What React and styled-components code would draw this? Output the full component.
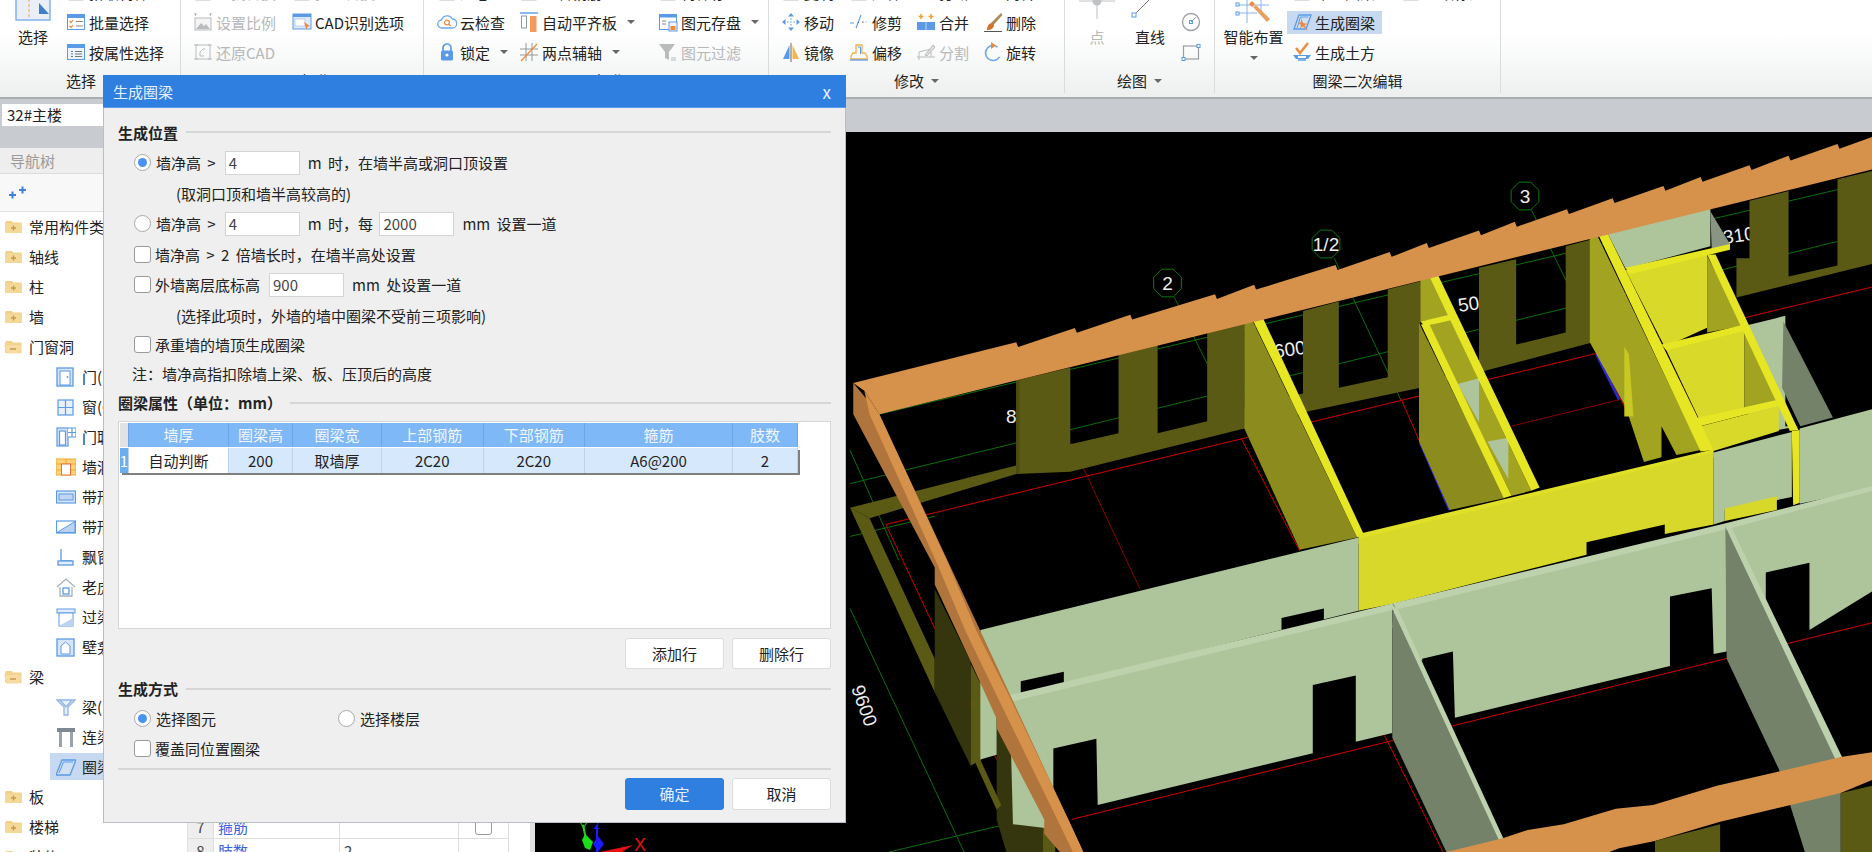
import React from "react";
import styled, { createGlobalStyle } from "styled-components";

const Global = createGlobalStyle`
  html, body { margin: 0; padding: 0; overflow: hidden; background: #c8cbd0; }
  body { font-family: "Noto Sans CJK SC", "Noto Sans", sans-serif; font-size: 15px; color: #222; }
  * { box-sizing: border-box; }
`;

const Page = styled.div`
  position: relative;
  display: flex;
  flex-direction: column;
  height: 100vh;
  overflow: hidden;
`;

/* ribbon */
const Ribbon = styled.div`
  flex: none;
  display: flex;
  height: 99px;
  overflow: hidden;
  background: linear-gradient(#ffffff 35%, #eef0f0 97%);
  border-bottom: 2px solid #a9adb1;
`;
const Group = styled.div`
  flex: none;
  width: ${(p) => p.$w}px;
  height: 116px;
  margin-top: -23px;
  display: flex;
  flex-direction: column;
  border-right: 1px solid #d9dbdc;
`;
const GroupBody = styled.div`
  display: flex;
  height: 91px;
  padding-left: ${(p) => p.$pad || 0}px;
`;
const GroupLabel = styled.div`
  height: 25px;
  display: flex;
  align-items: center;
  justify-content: center;
  padding-right: ${(p) => p.$right || 0}px;
  line-height: 1;
`;
const Col = styled.div`
  flex: none;
  width: ${(p) => p.$w}px;
  display: flex;
  flex-direction: column;
  margin-left: ${(p) => p.$left || 0}px;
`;
const ToolRow = styled.div`
  height: 30px;
  display: flex;
  align-items: center;
  white-space: nowrap;
`;
const ToolFace = styled.div`
  display: flex;
  align-items: center;
  gap: 3px;
  height: 23px;
  padding-left: ${(p) => p.$inset || 0}px;
  width: ${(p) => (p.$wide ? "95px" : "auto")};
  background: ${(p) => (p.$active ? "#c6d9f0" : "transparent")};
  color: ${(p) => (p.$muted ? "#b6b8ba" : "#222")};
`;
const IconBox = styled.svg`
  flex: none;
  width: 20px;
  height: 20px;
`;
const Caret = styled.span`
  flex: none;
  width: 0;
  height: 0;
  margin-left: ${(p) => p.$left ?? 7}px;
  margin-top: ${(p) => p.$top || 0}px;
  border-left: 4px solid transparent;
  border-right: 4px solid transparent;
  border-top: 4px solid #666;
`;
const BigTool = styled.div`
  flex: none;
  width: ${(p) => p.$w}px;
  margin-left: ${(p) => p.$left || 0}px;
  display: flex;
  flex-direction: column;
  align-items: center;
  color: ${(p) => (p.$muted ? "#b6b8ba" : "#222")};
  white-space: nowrap;
`;
const BigIcon = styled.svg`
  flex: none;
  width: ${(p) => p.$w}px;
  height: 46px;
  margin-bottom: 4px;
`;
const BigText = styled.div`
  height: 20px;
  line-height: 20px;
`;

/* floor selector strip */
const Strip = styled.div`
  flex: none;
  height: 33px;
  padding: 5px 0 0 2px;
  background: #c8cbd0;
`;
const FloorSelect = styled.div`
  width: 160px;
  height: 22px;
  line-height: 22px;
  padding-left: 5px;
  background: #fff;
`;

/* main area */
const Main = styled.div`
  flex: 1;
  min-height: 0;
  display: flex;
`;
const Side = styled.div`
  flex: none;
  width: 535px;
  display: flex;
  padding-top: 16px;
  background: #c8cbd0;
`;
const TreePane = styled.div`
  flex: none;
  width: 187px;
  display: flex;
  flex-direction: column;
  background: #fff;
  overflow: hidden;
`;
const NavHead = styled.div`
  flex: none;
  height: 26px;
  line-height: 26px;
  padding-left: 10px;
  background: #eeeeee;
  color: #9a9a9a;
  border-bottom: 1px solid #dcdcdc;
`;
const NavTools = styled.div`
  flex: none;
  height: 38px;
  display: flex;
  align-items: center;
  padding-left: 8px;
  background: #f8f8f8;
  border-bottom: 1px solid #e0e0e0;
`;
const TreeRow = styled.div`
  flex: none;
  height: 30px;
  display: flex;
  align-items: center;
  gap: 6px;
  margin-left: ${(p) => (p.$child ? 50 : 0)}px;
  padding-left: ${(p) => (p.$child ? 6 : 4)}px;
  background: ${(p) => (p.$selected ? "#c6d9f0" : "transparent")};
  background-clip: padding-box;
  border-top: 1px solid transparent;
  border-bottom: 2px solid transparent;
  white-space: nowrap;
`;
const PropPane = styled.div`
  flex: 1;
  padding: 667px 5px 0 0;
  background: #fff;
  border-right: 5px solid #dfe0e2;
  overflow: hidden;
`;
const PropRow = styled.div`
  display: grid;
  grid-template-columns: 26px 126px 119px 51px;
  width: 322px;
  height: 24px;
  border-bottom: 1px solid #dedede;
`;
const PropCell = styled.div`
  display: flex;
  align-items: center;
  justify-content: ${(p) => (p.$center ? "center" : "flex-start")};
  padding-left: ${(p) => (p.$center ? 0 : 4)}px;
  border-left: 1px solid #dedede;
  border-right: ${(p) => (p.$last ? "1px solid #dedede" : "0")};
  background: ${(p) => (p.$head ? "#eeeeee" : "#fff")};
  color: ${(p) => (p.$link ? "#3a62e0" : "#444")};
`;
const Viewport = styled.div`
  flex: 1;
  min-width: 0;
  background: #000;
`;
const Scene = styled.svg`
  display: block;
  width: 100%;
  height: 100%;
`;

/* dialog */
const Dialog = styled.div`
  position: absolute;
  top: 75px;
  left: 103px;
  width: 743px;
  height: 748px;
  background: #efefef;
  border: 1px solid #b9bdc4;
  border-top: 0;
`;
const TitleBar = styled.div`
  height: 33px;
  margin: 0 -1px;
  padding: 0 15px 0 10px;
  display: flex;
  align-items: center;
  justify-content: space-between;
  background: #2e7fe0;
  border-bottom: 1px solid #5b9bea;
  color: #e6f0fc;
`;
const CloseX = styled.span`
  font-size: 17px;
  line-height: 1;
`;
const DialogBody = styled.div`
  padding: 0 14px;
`;
const Section = styled.div`
  height: 20px;
  margin-top: ${(p) => p.$top}px;
  display: flex;
  align-items: center;
  gap: 8px;
  font-weight: 700;
  line-height: 1;
  white-space: nowrap;
  &::after {
    content: "";
    flex: 1;
    height: 2px;
    background: #d6d6d6;
  }
`;
const Row = styled.div`
  height: ${(p) => p.$h || 30.5}px;
  margin-top: ${(p) => p.$top || 0}px;
  display: flex;
  align-items: center;
  padding-left: ${(p) => p.$indent ?? 16}px;
  white-space: pre;
  word-spacing: 3px;
`;
const Radio = styled.span`
  flex: none;
  width: 17px;
  height: 17px;
  margin-right: 5px;
  display: flex;
  align-items: center;
  justify-content: center;
  border: 1.5px solid #a8a8a8;
  border-radius: 50%;
  background: #fff;
  &::after {
    content: "";
    width: 9px;
    height: 9px;
    border-radius: 50%;
    background: ${(p) => (p.$on ? "#4a92f2" : "transparent")};
  }
`;
const Check = styled.span`
  flex: none;
  width: 17px;
  height: 17px;
  margin-right: ${(p) => (p.$flush ? 0 : 4)}px;
  border: 1.5px solid #9a9a9a;
  border-radius: 3px;
  background: #fff;
`;
const NumInput = styled.span`
  flex: none;
  width: 75px;
  height: 24px;
  line-height: 22px;
  margin: 0 8px 0 ${(p) => p.$left ?? 8}px;
  padding-left: 3px;
  background: #fff;
  border: 1px solid #d4d4d4;
  color: #444;
`;
const Spread = styled.span`
  width: ${(p) => p.$w}px;
  flex: none;
`;
const TableBox = styled.div`
  height: 208px;
  margin-top: 8px;
  padding-top: 1px;
  padding-left: 1px;
  background: #fff;
  border: 1px solid #d6d6d6;
`;
const GridRow = styled.div`
  display: grid;
  grid-template-columns: 9px 100px 64px 89px 101.5px 101.5px 148px 65px;
  width: 678px;
  height: ${(p) => p.$h}px;
  margin-bottom: ${(p) => p.$gap || 0}px;
  box-shadow: ${(p) => (p.$data ? "2px 2px 0 #7f7f7f" : "none")};
`;
const HeadCell = styled.div`
  display: flex;
  align-items: center;
  justify-content: center;
  background: ${(p) => (p.$corner ? "#e2e2e2" : "#7fb8f6")};
  border-right: 1px solid #6aa6ea;
  color: #f1f6fd;
`;
const DataCell = styled.div`
  display: flex;
  align-items: center;
  justify-content: center;
  background: ${(p) => p.$bg || "#d5e8fc"};
  border-right: 1px solid #bcd3ea;
  color: ${(p) => p.$color || "#222"};
`;
const ButtonBar = styled.div`
  display: flex;
  justify-content: flex-end;
  gap: 8px;
  margin-top: ${(p) => p.$top}px;
`;
const Btn = styled.div`
  width: 99px;
  height: ${(p) => p.$h}px;
  display: flex;
  align-items: center;
  justify-content: center;
  border-radius: 3px;
  border: 1px solid ${(p) => (p.$primary ? "#2e7fe0" : "#dcdcdc")};
  background: ${(p) => (p.$primary ? "#2e7fe0" : "#fff")};
  color: ${(p) => (p.$primary ? "#e6f0fc" : "#222")};
`;
const Rule = styled.div`
  height: 2px;
  margin-top: 4px;
  background: #d6d6d6;
`;

const B = "#5b9ae6";
const O = "#ef8a3c";
const G = "#b9bbbd";

const icons = {
  stub: (c) => <rect x="3" y="1" width="14" height="17" fill="#f4f4f4" stroke={c || G} />,
  batch: () => (
    <g fill="none">
      <rect x="1.5" y="2.5" width="17" height="15" fill="#fff" stroke={B} />
      <rect x="1" y="2" width="18" height="4" fill={B} />
      <path d="M3.5 9l1.5 1.5 2-2.5M3.5 14l1.5 1.5 2-2.5" stroke={O} strokeWidth="1.2" />
      <path d="M10 9.5h7M10 14h7" stroke="#888" />
    </g>
  ),
  attr: () => (
    <g fill="none">
      <rect x="1.5" y="2.5" width="17" height="15" fill="#eef4fc" stroke={B} />
      <rect x="1" y="2" width="18" height="4" fill={B} />
      <path d="M9 9.5h7M9 12h7M9 14.5h7M5 12h2M5 9.5h2M5 14.5h2" stroke="#777" />
    </g>
  ),
  scale: () => (
    <g>
      <path d="M1 2h3M2.5 1v3M16 2h3M17.5 1v3" stroke={G} />
      <rect x="2" y="6" width="16" height="12" fill="#f4f4f4" stroke={G} />
      <path d="M3 17l5-6 3 3 2-2 4 5z" fill={G} />
    </g>
  ),
  restore: () => (
    <g fill="none" stroke={G}>
      <rect x="3" y="3" width="14" height="14" />
      <path d="M1 3h4M15 3h4M1 17h4M15 17h4M7 10l3-3h2M7 10v4h4" />
    </g>
  ),
  cad: () => (
    <g>
      <rect x="1" y="2" width="18" height="15" fill="#dfeafa" stroke={B} />
      <rect x="1" y="2" width="18" height="3" fill={B} />
      <rect x="3" y="7" width="10" height="7" fill="#fff" stroke="#9ab9e4" strokeWidth=".6" />
      <path d="M12 10l6 4-2.5.7-1 3z" fill={O} />
    </g>
  ),
  cloud: () => (
    <g>
      <path d="M5 16a4 4 0 0 1-.5-8A6 6 0 0 1 15.5 7 4.5 4.5 0 0 1 15 16z" fill="#fff" stroke="#6aa8ee" strokeWidth="1.3" />
      <circle cx="10" cy="10.5" r="2.4" fill="none" stroke={O} strokeWidth="1.2" />
      <path d="M12 12.5l2 1.5" stroke={O} strokeWidth="1.2" />
    </g>
  ),
  lock: () => (
    <g>
      <path d="M6 9V6a4 4 0 0 1 8 0v3" fill="none" stroke={B} strokeWidth="1.7" />
      <rect x="4" y="8.5" width="12" height="10" rx="1.5" fill={B} />
      <circle cx="10" cy="13" r="1.6" fill="#fff" />
    </g>
  ),
  panel: () => (
    <g>
      <path d="M1 1h18" stroke={B} strokeWidth="1.4" />
      <rect x="2.5" y="4" width="5" height="12" fill="#fff" stroke="#8c98a6" />
      <rect x="11" y="4" width="6.5" height="16" fill="#f59a5e" />
    </g>
  ),
  axis: () => (
    <g fill="none">
      <path d="M1 7h18M1 13h18M7 1v18M13 1v18" stroke="#8c8c8c" strokeWidth=".9" />
      <path d="M2 19L18 2" stroke={O} strokeWidth="1.2" />
    </g>
  ),
  disk: () => (
    <g>
      <rect x="1.5" y="2.5" width="17" height="15" fill="#fff" stroke={B} />
      <rect x="1" y="2" width="18" height="3.5" fill={B} />
      <path d="M4 9h4M4 12h4" stroke="#888" />
      <rect x="11" y="10" width="8" height="9" fill="#f6f6f6" stroke={B} />
      <rect x="12.5" y="14" width="5" height="4" fill={O} />
    </g>
  ),
  filter: () => (
    <g>
      <path d="M1 2h16l-6 8v8l-4-2v-6z" fill={G} />
      <path d="M13 16h5M13 18h5" stroke={G} />
    </g>
  ),
  move: () => (
    <g fill={B}>
      <path d="M10 1l3 3.5H7zM10 19l3-3.500H7zM1 10l3.500-3v6zM19 10l-3.500-3v6z" />
      <path d="M6 10h1.500M9 10h1.500M12.500 10h1.500M10 6.500v1.500M10 12v1.500" stroke={B} />
    </g>
  ),
  trim: () => (
    <g stroke={B} fill="none">
      <path d="M1 11h4M14 10h1M16.500 10h1" />
      <path d="M12 3L7 16" strokeWidth="1.1" />
      <path d="M13 10h1M9 10.500h1" stroke="#555" />
    </g>
  ),
  merge: () => (
    <g>
      <rect x="1" y="10" width="18" height="8" fill={B} />
      <path d="M5 2v5M2.500 4.500h5M15 2v5M12.500 4.500h5" stroke="#f0a030" strokeWidth="1.500" />
      <path d="M10 10v8" stroke="#fff" strokeWidth=".6" />
    </g>
  ),
  erase: () => (
    <g>
      <path d="M8 11L18 1l1.500 2-9 10z" fill="#b08a5a" />
      <path d="M4 18c0-4 2-7 5-7l2 2c0 3-3 5-7 5z" fill="#d2722e" />
      <path d="M1 19.500h18" stroke="#555" />
    </g>
  ),
  mirror: () => (
    <g>
      <path d="M8.500 3v14H2z" fill={B} />
      <path d="M11.500 3v14H18z" fill="#f5b54a" />
      <path d="M10 1v19" stroke="#666" />
    </g>
  ),
  offset: () => (
    <g fill="none">
      <path d="M2 14l2-3h3V3h6v8h3l2 3v3H2z" stroke="#f3b04a" strokeWidth="1.300" />
      <path d="M1 18h18" stroke={B} strokeWidth="1.300" />
      <path d="M8.500 5h3v7" stroke={B} />
    </g>
  ),
  split: () => (
    <g fill="none" stroke={G}>
      <path d="M1 15h18M3 18V10l12-3v8" />
      <path d="M9 13L17 3l2 2-8 9z" fill="#ddd" />
    </g>
  ),
  rotate: () => (
    <g fill="none">
      <circle cx="10" cy="11" r="7.500" stroke="#6aa8ee" strokeWidth="1.600" strokeDasharray="36 8" strokeDashoffset="-4" />
      <path d="M8 0v7l5-3.500z" fill={O} />
    </g>
  ),
  lineEnd: () => <rect x="8" y="-3" width="4" height="10" fill="none" stroke={B} />,
  circle: () => (
    <g fill="none">
      <circle cx="10" cy="10" r="8.500" stroke="#9a9ea3" strokeWidth="1.300" />
      <path d="M10 10l5-5" stroke="#9a9ea3" />
      <rect x="8.500" y="8.500" width="3" height="3" stroke={B} />
    </g>
  ),
  rect: () => (
    <g fill="none">
      <rect x="2.500" y="4" width="15" height="13" stroke="#9a9ea3" strokeWidth="1.200" />
      <rect x="1" y="15.500" width="3" height="3" fill="#fff" stroke={B} />
      <rect x="16" y="2.500" width="3" height="3" fill="#fff" stroke={B} />
    </g>
  ),
  ring: () => (
    <g>
      <path d="M2 17L7 3h12l-5 14z" fill="#cfe0f5" stroke={B} strokeWidth="1.300" />
      <path d="M5 16L8.500 5h8" fill="none" stroke={B} />
      <path d="M9 6l2 5 5 1-3.500 1 3.500 6-5-4.500-3 1.500 1-3-3-2 3-1z" fill={O} />
    </g>
  ),
  earth: () => (
    <g>
      <path d="M4 6l4 5 8-10" fill="none" stroke={O} strokeWidth="2.400" />
      <path d="M1 13h18l-3 4H4z" fill={B} />
      <rect x="6" y="14" width="8" height="2" fill="#fff" />
      <path d="M6 18h8" stroke={B} strokeWidth="1.500" />
    </g>
  ),
};

const Tool = ({ icon, label, muted, caret, active, wide, inset }) => (
  <ToolRow>
    <ToolFace $muted={muted} $active={active} $wide={wide} $inset={inset}>
      <IconBox viewBox="0 0 20 20">{icons[icon]()}</IconBox>
      {label && <span>{label}</span>}
      {caret && <Caret />}
    </ToolFace>
  </ToolRow>
);

const Folder = ({ open }) => (
  <svg width="19" height="14" viewBox="0 0 19 14">
    <path d="M1 3l1-2h6l1 1.500h8.500V13H1z" fill={open ? "#f2d28c" : "#f0cf88"} />
    {open ? (
      <path d="M0 5h18l-3 8.500H3z" fill="#f6dca2" />
    ) : (
      <rect x="1" y="3.500" width="17" height="9.500" fill="#f3d898" />
    )}
    {open ? (
      <path d="M6 9h6" stroke="#c79a48" strokeWidth="1.500" />
    ) : (
      <path d="M7 8h5M9.500 5.500v5" stroke="#c79a48" strokeWidth="1.300" />
    )}
  </svg>
);

const leaf = {
  door: <g><rect x="1" y="1" width="16" height="18" fill="#d7e5f8" stroke={B} strokeWidth="1.300" /><rect x="4" y="4" width="10" height="14" fill="#fff" stroke={B} /><circle cx="11.500" cy="10" r=".9" fill={B} /></g>,
  win: <g fill="#e8f0fb" stroke={B} strokeWidth="1.200"><rect x="2" y="3" width="15" height="15" /><path d="M9.500 3v15M2 10.500h15" /></g>,
  doorwin: <g fill="#fff" stroke={B} strokeWidth="1.200"><rect x="1" y="1" width="11" height="18" fill="#d7e5f8" /><rect x="3.500" y="4" width="6" height="14" /><path d="M12 1h8v9h-8M16 1v9M12 5.500h8" /></g>,
  hole: <g><rect x="0" y="2" width="20" height="16" fill="#ffd27a" stroke="#f0a830" /><path d="M0 7h20M0 13h5M15 13h5M10 2v5" stroke="#f0a830" /><rect x="5.500" y="7" width="9" height="11" fill="#fff" stroke="#e2713a" /></g>,
  band: <g><rect x="0.500" y="4" width="19" height="12" fill="#d7e5f8" stroke={B} strokeWidth="1.200" /><rect x="3" y="7" width="14" height="6" fill="#c0d6f2" stroke={B} /></g>,
  slant: <g><rect x="0.500" y="4" width="19" height="12" fill="#fff" stroke={B} strokeWidth="1.200" /><path d="M1 15.500L19 4.500v11z" fill="#bcd3f0" stroke={B} /></g>,
  bay: <g fill="none" stroke={B} strokeWidth="1.300"><path d="M5 2v12h11" /><rect x="2" y="14" width="15" height="4" fill="#e4eefa" /></g>,
  dormer: <g fill="none" stroke="#a4b0bc" strokeWidth="1.300"><path d="M1 10l9-8 9 8" /><path d="M4 10v9h12v-9" /><rect x="7" y="11" width="6" height="6" stroke={B} /></g>,
  lintel: <g><rect x="1" y="2" width="18" height="4" fill="#e4eefa" stroke={B} /><rect x="3" y="6" width="14" height="13" fill="#fff" stroke={B} /><path d="M3 19l14-8v8z" fill="#bcd3f0" /></g>,
  niche: <g><rect x="1" y="2" width="17" height="17" fill="#d7e5f8" stroke={B} strokeWidth="1.300" /><path d="M5 17V9l4.500-4L14 9v8z" fill="#fff" stroke={B} /></g>,
  beam: <g fill="none" stroke="#8fb4e6" strokeWidth="1.300"><path d="M1 3h18l-7 7v8H8v-8z" fill="#e6f0fb" /><path d="M4 3l6 7 6-7" /></g>,
  link: <g><rect x="1" y="1" width="18" height="4" fill="#7e8894" /><rect x="3" y="5" width="3" height="15" fill="#9aa3ad" /><rect x="14" y="5" width="3" height="15" fill="#9aa3ad" /></g>,
  ring: <g><path d="M0 18L6 3h14l-6 15z" fill="#cfe0f5" stroke={B} strokeWidth="1.300" /><path d="M3 16L7.500 5H17" fill="none" stroke={B} /></g>,
};

const treeData = [
  ["常用构件类型"], ["轴线"], ["柱"], ["墙"], ["门窗洞", "open"],
  ["门(M)", "door"], ["窗(C)", "win"], ["门联窗(A)", "doorwin"], ["墙洞(D)", "hole"],
  ["带形窗(C)", "band"], ["带形洞", "slant"], ["飘窗(PC)", "bay"], ["老虎窗", "dormer"],
  ["过梁(G)", "lintel"], ["壁龛(I)", "niche"], ["梁", "open"], ["梁(L)", "beam"],
  ["连梁(G)", "link"], ["圈梁(B)", "ring"], ["板"], ["楼梯"], ["装修"],
];

const TreeItem = ({ label, kind }) => {
  const isFolder = !kind || kind === "open";
  return (
    <TreeRow $child={!isFolder} $selected={kind === "ring"}>
      {isFolder ? (
        <Folder open={kind === "open"} />
      ) : (
        <svg width="20" height="20" viewBox="0 0 20 20">{leaf[kind]}</svg>
      )}
      <span>{label}</span>
    </TreeRow>
  );
};

// the far beam has a sawtooth top edge, one tooth per bay
const teeth = [255, 345, 430, 560, 620, 745, 828, 885, 965, 1020, 1100, 1170, 1248, 1305, 1380, 1440, 1515];
const topEdge = (x) => 590 - 0.328 * (x - 5);
const farBeam = [
  "5,590",
  ...teeth.flatMap((x) => [`${x},${topEdge(x) - 3}`, `${x + 3},${topEdge(x) + 7}`]),
  `1568,${topEdge(1568)}`,
  "1568,145 45,655 22,606",
].join(" ");

/* scene: points are taken against a 1568x1568 grid laid over the right part of the view */
const shapes = [
  // back wall
  ["#5a5a14", "0,850 255,762 255,780 30,872"],
  ["#5a5a14", "255,585 338,558 338,718 412,695 412,520 472,502 472,695 548,670 548,470 605,450 605,685 338,775 255,780"],
  ["#4c4c10", "255,585 260,585 260,780 255,780"],
  ["#5a5a14", "605,640 695,612 695,440 750,420 750,600 825,578 825,395 875,378 875,590 965,555 965,350 1022,332 1022,510 1098,485 1098,305 1140,290 1140,505 875,600 700,650 605,685"],
  ["#5a5a14", "1380,210 1440,190 1440,368 1515,345 1515,165 1568,148 1568,342 1360,412 1360,330 1380,330"],
  ["#5a5a14", "0,850 30,872 130,1165 130,1235"],
  ["#36360e", "130,1020 185,1170 185,1388 130,1235"],
  ["#5a5a14", "185,1175 205,1230 202,1375 185,1388"],
  ["#36360e", "225,1300 300,1495 296,1568 240,1568 225,1500"],
  ["#5a5a14", "190,1375 198,1370 232,1470 225,1480"],
  ["#5a5a14", "296,1490 315,1530 315,1568 296,1568"],
  // far walls
  ["#aec49a", "1160,272 1320,225 1320,305 1190,352"],
  ["#8a9482", "1320,232 1350,300 1350,310 1322,310"],
  ["#aec49a", "1375,470 1435,450 1435,680 1455,680 1380,700"],
  ["#75826a", "1432,462 1508,662 1458,680 1430,600"],
  // yellow partitions
  ["#8c8c1e", "605,425 778,912 690,938 605,685"],
  ["#a3a322", "875,330 925,450 875,462"],
  ["#8c8c1e", "873,465 1005,830 920,855 873,712"],
  ["#a3a322", "888,470 920,455 1045,815 1015,825"],
  ["#aec49a", "932,592 965,580 965,672"],
  ["#aec49a", "978,712 1010,704 1010,790"],
  ["#a3a322", "1135,250 1305,730 1268,740 1245,680 1245,745 1218,755 1190,640 1135,505"],
  ["#d9d92a", "1190,355 1315,318 1315,475 1250,515"],
  ["#a3a322", "1315,325 1372,470 1315,485"],
  ["#d9d92a", "1250,515 1372,475 1372,645 1305,672"],
  ["#a3a322", "1372,480 1425,625 1372,645"],
  ["#d9d92a", "1305,680 1425,638 1425,690 1325,732"],
  ["#e6e624", "605,422 620,415 788,905 778,912"],
  ["#e6e624", "876,468 888,465 1015,825 1003,830"],
  ["#e6e624", "875,462 920,448 925,458 882,472"],
  ["#e6e624", "875,328 888,325 1058,808 1045,815"],
  ["#e6e624", "1135,243 1148,238 1325,730 1305,733"],
  ["#e6e624", "1190,350 1350,300 1350,312 1195,364"],
  ["#e6e624", "1315,322 1328,322 1455,688 1442,690"],
  ["#e6e624", "1245,510 1372,468 1376,480 1252,522"],
  ["#e6e624", "1296,664 1420,626 1425,638 1304,680"],
  ["#c8c824", "1188,515 1195,530 1202,660 1188,660"],
  // wall with the yellow bay
  ["#e0e028", "780,905 1325,728 1325,745 780,925"],
  ["#d8d82a", "780,915 1325,735 1325,885 1250,905 1250,885 1130,922 1130,948 835,1050 780,1065"],
  ["#aec49a", "1325,735 1445,692 1445,828 1342,855 1342,878 1325,885"],
  ["#aec49a", "1457,685 1568,645 1568,810 1457,842"],
  ["#e6e624", "1445,690 1457,688 1457,840 1447,845"],
  ["#d8d82a", "1342,852 1422,826 1422,855 1342,878"],
  // pale walls
  ["#aec49a", "200,1105 780,912 780,1065 245,1245 225,1252 225,1365 200,1375"],
  ["#000000", "262,1212 328,1192 328,1218 262,1238"],
  ["#000000", "662,1080 727,1060 727,1085 662,1105"],
  ["#aec49a", "245,1250 832,1058 832,1320 776,1338 776,1200 710,1220 710,1362 380,1470 378,1332 312,1352 312,1520 250,1510"],
  ["#bdd1ac", "235,1244 832,1050 838,1062 245,1255"],
  ["#aec49a", "835,1055 1345,888 1345,1150 1325,1155 1322,1018 1258,1035 1258,1180 928,1288 925,1150 878,1165 878,1170 832,1100"],
  ["#aec49a", "1345,888 1568,812 1568,1025 1472,1105 1472,965 1405,985 1405,1045"],
  ["#bdd1ac", "832,1050 1345,882 1568,805 1568,815 1345,895 840,1062"],
  ["#75826a", "832,1060 1008,1568 915,1568 832,1330"],
  ["#bdd1ac", "832,1060 840,1060 1012,1568 1004,1568"],
  ["#75826a", "1343,890 1520,1370 1520,1568 1465,1568 1425,1395 1345,1165"],
  ["#bdd1ac", "1343,890 1352,890 1522,1370 1512,1375"],
  // orange beams
  ["#b0753c", "5,590 5,655 130,975 130,1010 185,1170 225,1290 225,1310 298,1500 298,1530 322,1568 358,1568 45,655"],
  ["#d6914a", "22,606 45,655 150,965 195,1110 245,1245 335,1500 358,1568 342,1568 318,1500 228,1250 178,1110 133,965 30,655"],
  ["#d6914a", farBeam],
  ["#d6914a", "915,1568 1000,1540 1040,1522 1095,1510 1175,1478 1232,1470 1330,1430 1520,1370 1568,1360 1568,1418 1520,1445 1335,1505 1235,1545 1180,1560 1165,1568"],
  ["#5a5a14", "1235,1545 1335,1510 1335,1568 1235,1568"],
  ["#5a5a14", "1520,1445 1568,1430 1568,1568 1520,1568"],
];

const thin = [
  ["#0c6f0c", "45,655 1568,170"],
  ["#0c6f0c", "0,800 1515,295"],
  ["#0c6f0c", "0,910 130,868"],
  ["#0c6f0c", "0,730 75,960"],
  ["#0c6f0c", "0,1060 175,1568"],
  ["#0c6f0c", "60,1568 240,1510"],
  ["#0c6f0c", "497,410 548,550"],
  ["#0c6f0c", "743,330 845,625"],
  ["#0c6f0c", "1045,228 1100,380"],
  ["#d00000", "55,885 1568,390"],
  ["#d00000", "55,885 225,1375"],
  ["#d00000", "340,1500 1568,1090"],
  ["#8c0000", "340,715 445,1020"],
  ["#8c0000", "1015,680 1180,625"],
  ["#d00000", "600,705 690,940"],
  ["#d00000", "845,622 920,855"],
  ["#d00000", "820,1325 910,1568"],
  ["#d00000", "1145,530 1220,720"],
  ["#2a2ad8", "875,715 920,855"],
  ["#2a2ad8", "1145,530 1180,625"],
  ["#2a2ad8", "1205,615 1216,612"],
];

const octagon = (cx, cy, r) => {
  const pts = [];
  for (let i = 0; i < 8; i++) {
    const a = (Math.PI / 4) * i + Math.PI / 8;
    pts.push(`${cx + r * Math.cos(a)},${cy + r * Math.sin(a)}`);
  }
  return pts.join(" ");
};

const bubbles = [
  [1167.5, 283, "2"],
  [1326, 244, "1/2"],
  [1525, 196, "3"],
];
const dims = [
  [1006, 423, "8", 0],
  [1275, 358, "600", -8],
  [1459, 312, "50", -8],
  [1724, 244, "310", -8],
  [851, 688, "9600", 70],
];

const SceneView = () => (
  <Scene viewBox="535 132 1337 720" preserveAspectRatio="none">
    {dims.map(([x, y, t, r]) => (
      <text key={t} x={x} y={y} fill="#eee" fontSize="19" fontFamily="Liberation Sans, sans-serif" transform={`rotate(${r} ${x} ${y})`}>
        {t}
      </text>
    ))}
    <g transform="translate(850 100) scale(.6518 .4796)">
      {thin.map(([c, s], i) => (
        <polyline key={i} points={s} stroke={c} fill="none" strokeWidth={c === "#2a2ad8" ? 2.5 : 1} vectorEffect="non-scaling-stroke" />
      ))}
      {shapes.map(([c, s], i) => (
        <polygon key={i} points={s} fill={c} />
      ))}
    </g>
    {bubbles.map(([x, y, t]) => (
      <g key={t}>
        <polygon points={octagon(x, y, 15)} fill="none" stroke="#0c7a0c" />
        <text x={x} y={y + 7} fill="#eee" fontSize="19" textAnchor="middle" fontFamily="Liberation Sans, sans-serif">
          {t}
        </text>
      </g>
    ))}
    <g>
      <path d="M583 825l3 14" stroke="#1fd01f" strokeWidth="2" />
      <path d="M585 834l8 8-3 8-5-2-3-8z" fill="#18e018" />
      <path d="M597 825v27" stroke="#1a1aff" strokeWidth="2" />
      <path d="M598 836l6 8-6 8-5-8z" fill="#1a1aff" />
      <path d="M600 852l33-7-11 7z" fill="#e81010" />
      <text x="634" y="851" fill="#e81010" fontSize="18" fontFamily="Liberation Sans, sans-serif">X</text>
      <text x="580" y="831" fill="#1fd01f" fontSize="11" fontFamily="Liberation Sans, sans-serif">Y</text>
      <text x="594" y="829" fill="#1a1aff" fontSize="11" fontFamily="Liberation Sans, sans-serif">Z</text>
    </g>
  </Scene>
);

const heads = ["墙厚", "圈梁高", "圈梁宽", "上部钢筋", "下部钢筋", "箍筋", "肢数"];
const cells = ["200", "取墙厚", "2C20", "2C20", "A6@200", "2"];

const App = () => (
  <Page>
    <Global />
    <Ribbon>
      <Group $w={181}>
        <GroupBody>
          <BigTool $w={66}>
            <BigIcon $w={36} viewBox="0 0 36 46">
              <rect x="1" y="1" width="34" height="42" fill="#e9eef7" stroke="#84b2ea" strokeWidth="1.5" />
              <path d="M14 2v40" stroke="#f0a830" strokeDasharray="3 2" />
              <path d="M24 26l10 11-10 0z" fill="#3f7fc8" />
            </BigIcon>
            <BigText>选择</BigText>
          </BigTool>
          <Col $w={114}>
            <Tool icon="stub" label="拾取构件" />
            <Tool icon="batch" label="批量选择" />
            <Tool icon="attr" label="按属性选择" />
          </Col>
        </GroupBody>
        <GroupLabel $right={18}>选择</GroupLabel>
      </Group>
      <Group $w={243}>
        <GroupBody $pad={12}>
          <Col $w={99}>
            <Tool icon="stub" label="查找替换" muted />
            <Tool icon="scale" label="设置比例" muted />
            <Tool icon="restore" label="还原CAD" muted />
          </Col>
          <Col $w={120}>
            <Tool icon="stub" label="批量替换" muted />
            <Tool icon="cad" label="CAD识别选项" />
          </Col>
        </GroupBody>
        <GroupLabel>CAD操作</GroupLabel>
      </Group>
      <Group $w={345}>
        <GroupBody $pad={13}>
          <Col $w={82}>
            <Tool icon="stub" label="汇总" />
            <Tool icon="cloud" label="云检查" />
            <Tool icon="lock" label="锁定" caret />
          </Col>
          <Col $w={139}>
            <Tool icon="stub" label="查看钢筋量" />
            <Tool icon="panel" label="自动平齐板" caret />
            <Tool icon="axis" label="两点辅轴" caret />
          </Col>
          <Col $w={100}>
            <Tool icon="stub" label="构件存盘" />
            <Tool icon="disk" label="图元存盘" caret />
            <Tool icon="filter" label="图元过滤" muted />
          </Col>
        </GroupBody>
        <GroupLabel>通用操作</GroupLabel>
      </Group>
      <Group $w={296}>
        <GroupBody $pad={12}>
          <Col $w={68}>
            <Tool icon="stub" label="复制" />
            <Tool icon="move" label="移动" />
            <Tool icon="mirror" label="镜像" />
          </Col>
          <Col $w={67}>
            <Tool icon="stub" label="延伸" />
            <Tool icon="trim" label="修剪" />
            <Tool icon="offset" label="偏移" />
          </Col>
          <Col $w={67}>
            <Tool icon="merge" label="打断" />
            <Tool icon="merge" label="合并" />
            <Tool icon="split" label="分割" muted />
          </Col>
          <Col $w={60}>
            <Tool icon="merge" label="对齐" />
            <Tool icon="erase" label="删除" />
            <Tool icon="rotate" label="旋转" />
          </Col>
        </GroupBody>
        <GroupLabel>
          修改
          <Caret />
        </GroupLabel>
      </Group>
      <Group $w={150}>
        <GroupBody $pad={12}>
          <BigTool $w={40} $muted>
            <BigIcon $w={40} viewBox="0 0 40 46">
              <path d="M20 14v28M2 24h36" stroke="#c0c2c4" />
              <circle cx="20" cy="24" r="4.500" fill="#c0c2c4" />
            </BigIcon>
            <BigText>点</BigText>
          </BigTool>
          <BigTool $w={40} $left={13}>
            <BigIcon $w={40} viewBox="0 0 40 46">
              <path d="M4 38L30 12" stroke="#777" />
              <rect x="2" y="36" width="4" height="4" fill="#fff" stroke={B} />
            </BigIcon>
            <BigText>直线</BigText>
          </BigTool>
          <Col $w={20} $left={11}>
            <Tool icon="lineEnd" />
            <Tool icon="circle" />
            <Tool icon="rect" />
          </Col>
        </GroupBody>
        <GroupLabel>
          绘图
          <Caret />
        </GroupLabel>
      </Group>
      <Group $w={286}>
        <GroupBody $pad={5}>
          <BigTool $w={67}>
            <BigIcon $w={38} viewBox="0 0 38 46">
              <path d="M2 28h32M2 36h20M12 18v28M26 18v20" stroke="#86b3ea" />
              <path d="M18 30l14 15 3-3-14-14z" fill="#e8a060" />
              <path d="M14 27l3-3 3 3-3 3z" fill={O} />
              <rect x="1" y="26" width="3" height="3" fill="#fff" stroke={B} />
              <rect x="1" y="35" width="3" height="3" fill="#fff" stroke={B} />
            </BigIcon>
            <BigText>智能布置</BigText>
            <Caret $left={0} $top={9} />
          </BigTool>
          <Col $w={95}>
            <Tool icon="stub" label="布置圈梁" wide inset={5} />
            <Tool icon="ring" label="生成圈梁" active wide inset={5} />
            <Tool icon="earth" label="生成土方" wide inset={5} />
          </Col>
          <Col $w={100} $left={19}>
            <Tool icon="stub" label="查改标注" />
          </Col>
        </GroupBody>
        <GroupLabel>圈梁二次编辑</GroupLabel>
      </Group>
    </Ribbon>

    <Strip>
      <FloorSelect>32#主楼</FloorSelect>
    </Strip>

    <Main>
      <Side>
        <TreePane>
          <NavHead>导航树</NavHead>
          <NavTools>
            <svg width="20" height="16" viewBox="0 0 20 16">
              <path d="M1 10h7M4.500 6.500v7M11 5h7M14.500 1.500v7" stroke="#3f7fd8" strokeWidth="2" />
            </svg>
          </NavTools>
          {treeData.map(([label, kind]) => (
            <TreeItem key={label} label={label} kind={kind} />
          ))}
        </TreePane>
        <PropPane>
          <PropRow>
            <PropCell $head $center>7</PropCell>
            <PropCell $link>箍筋</PropCell>
            <PropCell />
            <PropCell $center $last>
              <Check $flush />
            </PropCell>
          </PropRow>
          <PropRow>
            <PropCell $head $center>8</PropCell>
            <PropCell $link>肢数</PropCell>
            <PropCell>2</PropCell>
            <PropCell $last />
          </PropRow>
        </PropPane>
      </Side>
      <Viewport>
        <SceneView />
      </Viewport>
    </Main>

    <Dialog>
      <TitleBar>
        <span>生成圈梁</span>
        <CloseX>x</CloseX>
      </TitleBar>
      <DialogBody>
        <Section $top={14}>生成位置</Section>
        <Row $top={5.5}>
          <Radio $on />
          墙净高 &gt;
          <NumInput $left={9}>4</NumInput>m 时，在墙半高或洞口顶设置
        </Row>
        <Row $indent={58}>(取洞口顶和墙半高较高的)</Row>
        <Row>
          <Radio />
          墙净高 &gt;
          <NumInput $left={9}>4</NumInput>m 时，每
          <NumInput $left={6.5}>2000</NumInput>mm 设置一道
        </Row>
        <Row>
          <Check />
          墙净高 &gt; 2 倍墙长时，在墙半高处设置
        </Row>
        <Row>
          <Check />
          外墙离层底标高
          <NumInput $left={9}>900</NumInput>mm 处设置一道
        </Row>
        <Row $indent={58}>(选择此项时，外墙的墙中圈梁不受前三项影响)</Row>
        <Row $h={28}>
          <Check />
          承重墙的墙顶生成圈梁
        </Row>
        <Row $h={29} $indent={14}>注：墙净高指扣除墙上梁、板、压顶后的高度</Row>

        <Section $top={5}>圈梁属性（单位：mm）</Section>
        <TableBox>
          <GridRow $h={24} $gap={1}>
            <HeadCell $corner />
            {heads.map((h) => (
              <HeadCell key={h}>{h}</HeadCell>
            ))}
          </GridRow>
          <GridRow $h={25} $data>
            <DataCell $bg="#6aaef0" $color="#fff">1</DataCell>
            <DataCell $bg="#fff">自动判断</DataCell>
            {cells.map((c, i) => (
              <DataCell key={i}>{c}</DataCell>
            ))}
          </GridRow>
        </TableBox>
        <ButtonBar $top={9}>
          <Btn $h={31}>添加行</Btn>
          <Btn $h={31}>删除行</Btn>
        </ButtonBar>

        <Section $top={10}>生成方式</Section>
        <Row $h={30} $top={5}>
          <Radio $on />
          选择图元
          <Spread $w={122} />
          <Radio />
          选择楼层
        </Row>
        <Row $h={30}>
          <Check />
          覆盖同位置圈梁
        </Row>
        <Rule />
        <ButtonBar $top={8}>
          <Btn $h={32} $primary>确定</Btn>
          <Btn $h={32}>取消</Btn>
        </ButtonBar>
      </DialogBody>
    </Dialog>
  </Page>
);

export default App;
